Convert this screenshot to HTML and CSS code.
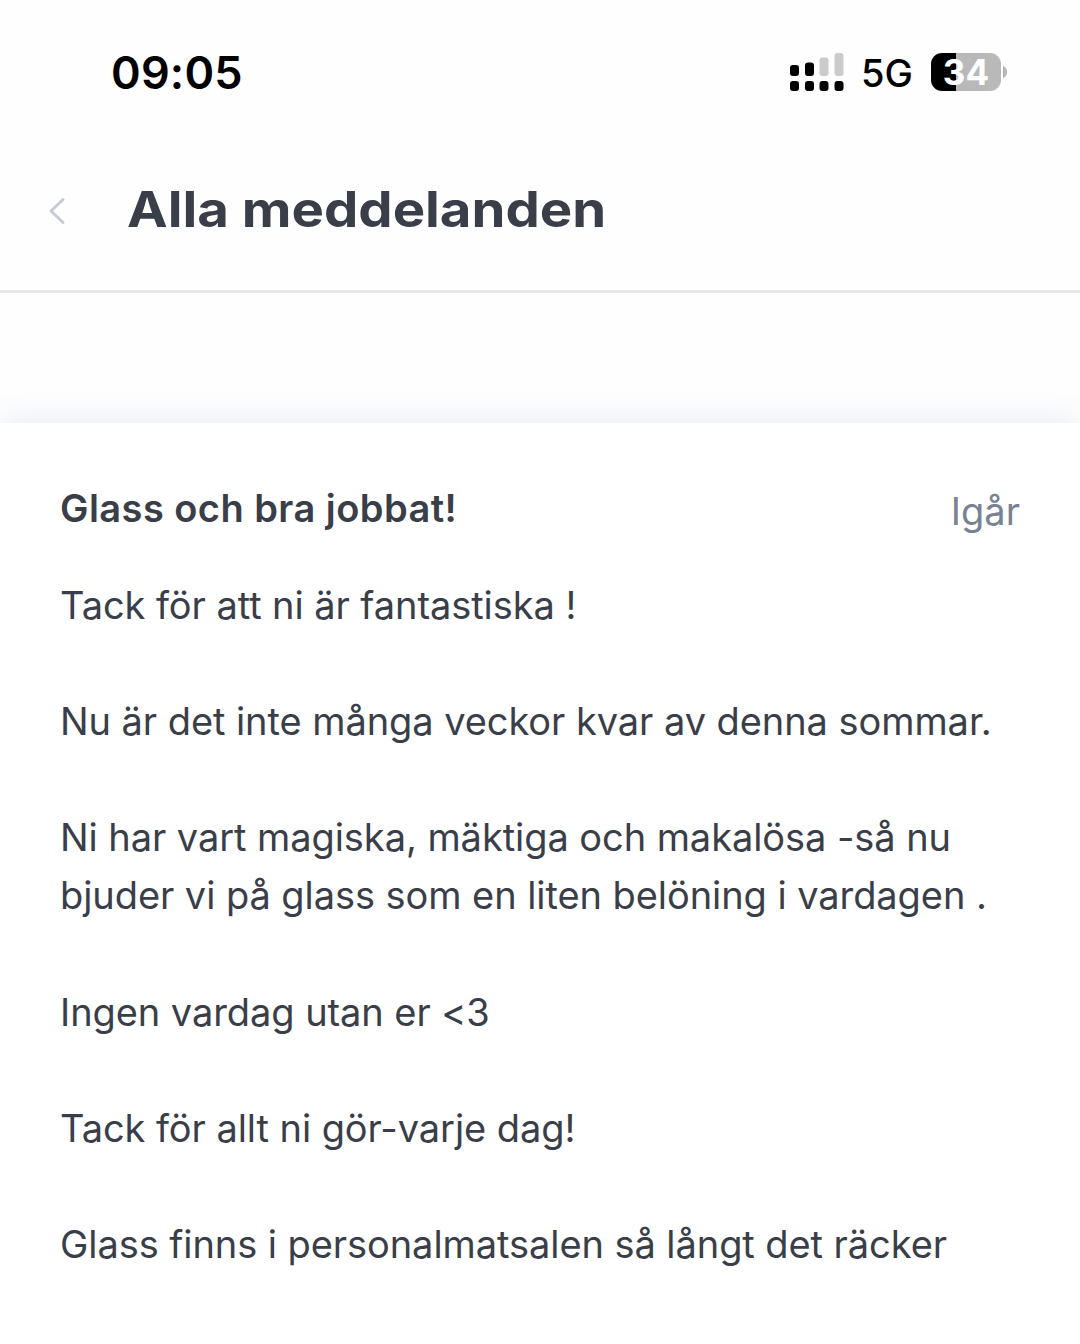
FILE: index.html
```
<!DOCTYPE html>
<html lang="sv">
<head>
  <meta charset="UTF-8">
  <meta name="viewport" content="width=device-width, initial-scale=1.0">
  <title>Alla meddelanden</title>
  <link rel="stylesheet" href="styles.css">
</head>
<body>
  <div class="status-bar">
    <span class="clock">09:05</span>
    <div class="status-icons">
      <svg class="signal" width="54" height="39" viewBox="0 0 54 39">
        <g fill="#000">
          <rect x="0" y="12" width="9" height="11" rx="3"/>
          <rect x="15" y="9.500" width="9" height="13.500" rx="3"/>
          <rect x="0" y="28" width="9" height="10" rx="3"/>
          <rect x="15" y="28" width="9" height="10" rx="3"/>
          <rect x="29.500" y="28" width="9" height="10" rx="3"/>
          <rect x="44.500" y="28" width="9" height="10" rx="3"/>
        </g>
        <g fill="#cbcbcb">
          <rect x="29.500" y="4.500" width="9" height="18.500" rx="3"/>
          <rect x="44.500" y="0" width="9" height="23" rx="3"/>
        </g>
      </svg>
      <span class="network">5G</span>
      <div class="battery">
        <span class="battery-level">34</span>
      </div>
      <svg class="battery-tip" width="5" height="12" viewBox="0 0 5 12">
        <path d="M0 0 C5.500 2 5.500 10 0 12 Z" fill="#b5b5b5"/>
      </svg>
    </div>
  </div>

  <header class="header">
    <svg class="back" width="18" height="28" viewBox="0 0 18 28">
      <path d="M15 2.500 L3 14 L15 25.500" fill="none" stroke="#c6cbd6" stroke-width="3" stroke-linecap="round" stroke-linejoin="round"/>
    </svg>
    <h1 class="title">Alla meddelanden</h1>
  </header>

  <main class="card">
    <div class="card-head">
      <h2 class="subject">Glass och bra jobbat!</h2>
      <span class="date">Igår</span>
    </div>
    <div class="message">
      <p>Tack för att ni är fantastiska !</p>
      <p>Nu är det inte många veckor kvar av denna sommar.</p>
      <p>Ni har vart magiska, mäktiga och makalösa -så nu<br>bjuder vi på glass som en liten belöning i vardagen .</p>
      <p>Ingen vardag utan er &lt;3</p>
      <p>Tack för allt ni gör-varje dag!</p>
      <p>Glass finns i personalmatsalen så långt det räcker</p>
    </div>
  </main>
</body>
</html>
```
FILE: styles.css
```
* {
  box-sizing: border-box;
}

body {
  margin: 0;
  height: 1344px;
  overflow: hidden;
  background-color: #fefefe;
  font-family: Inter, "Liberation Sans", sans-serif;
  color: #3a3e48;
}

.status-bar {
  display: flex;
  justify-content: space-between;
  align-items: center;
  height: 144px;
  padding: 0 72px 0 111px;
}

.clock {
  font-size: 45px;
  font-weight: 600;
  color: #000;
  letter-spacing: 0.2px;
}

.status-icons {
  display: flex;
  align-items: center;
}

.network {
  margin-left: 17px;
  padding-top: 2px;
  font-size: 38px;
  font-weight: 500;
  color: #000;
}

.battery {
  width: 70px;
  height: 38px;
  margin-left: 18px;
  border-radius: 11px;
  background: linear-gradient(to right, #000 25px, #b9b9b9 25px);
  text-align: center;
}

.battery-level {
  font-size: 35px;
  font-weight: 700;
  line-height: 38px;
  color: #fff;
}

.battery-tip {
  margin-left: 2px;
}

.header {
  display: flex;
  align-items: center;
  height: 149px;
  padding: 0 48px 12px;
  border-bottom: 3px solid #e8e8ea;
}

.title {
  margin: 0 0 2px 61px;
  font-size: 49px;
  font-weight: 700;
  line-height: 60px;
  white-space: nowrap;
  /* wider letters for the heading */
  transform: scaleX(1.112);
  transform-origin: left;
}

.card {
  margin-top: 130px;
  padding: 56px 60px 0;
  height: 960px;
  background-color: #fff;
  box-shadow: 0 0 32px rgba(80, 100, 190, 0.14);
}

.card-head {
  display: flex;
  justify-content: space-between;
  align-items: center;
  height: 58px;
}

.subject {
  margin: 0;
  font-size: 38px;
  font-weight: 600;
  letter-spacing: 0.45px;
}

.date {
  padding-top: 5px;
  font-size: 38px;
  color: #788295;
}

.message {
  margin-top: 39px;
  font-size: 38px;
  line-height: 58.1px;
  letter-spacing: -0.07px;
  white-space: nowrap;
}

.message p {
  margin: 0 0 58.1px;
}
```
